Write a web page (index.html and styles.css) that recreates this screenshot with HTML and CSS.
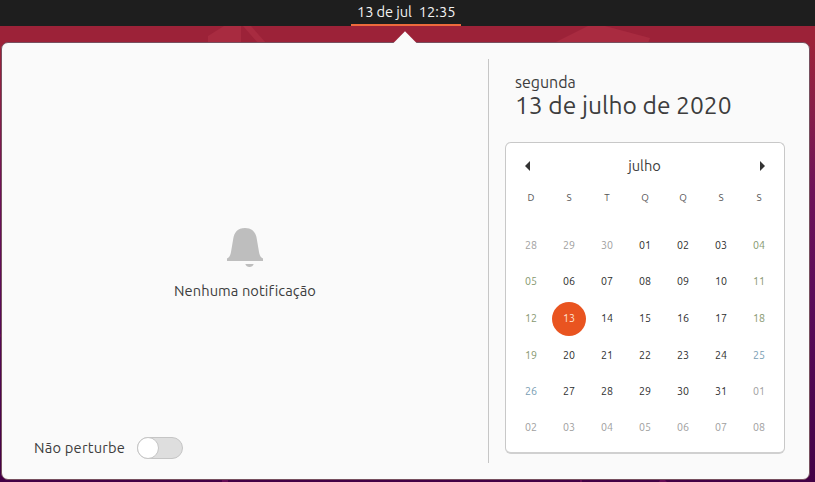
FILE: index.html
```html
<!DOCTYPE html>
<html lang="pt-BR">
<head>
<meta charset="utf-8">
<title>Calendário</title>
<link rel="stylesheet" href="styles.css">
</head>
<body>
<svg class="wallpaper" width="815" height="482" viewBox="0 0 815 482" aria-hidden="true">
  <path d="M208 36 224 26H241V44H208Z" fill="#a82b40"/>
  <path d="M243 26h8l15 17h-8Z" fill="#a82b40"/>
  <path d="M554 43 588 26h17l45 12-2 5Z" fill="#a92b40"/>
  <path d="M222 480h6v2h-6ZM580 480h2v2h-2ZM660 480h5l2 2h-8ZM0 268l2 2v2H0ZM0 334h2v3H0Z" fill="#650b55"/>
</svg>
<header class="topbar">
  <div class="clock"><span class="clock-date">13 de jul</span><span class="clock-time">12:35</span></div>
</header>
<main class="panel">
  <svg class="pointer" width="28" height="14" viewBox="0 0 28 14" aria-hidden="true"><path d="M1.500 14 14 1.200 26.500 14Z" fill="#fafafa"/></svg>
  <section class="notifications">
    <div class="empty">
      <svg class="bell" width="38" height="42" viewBox="0 0 38 42" aria-hidden="true">
        <path d="M19 1C11.500 1 8.200 5.500 7.200 12L5 25c-.6 3-1.300 4.500-2.500 5.500L1 31.500V34H37V31.500L35.500 30.500C34.300 29.500 33.600 28 33 25L30.800 12C29.800 5.500 26.500 1 19 1Z" fill="#bebebe"/>
        <path d="M19.300 37h8.400c-.6 1.800-2.200 3-4.200 3s-3.600-1.200-4.200-3Z" fill="#bebebe"/>
      </svg>
      <p class="empty-text">Nenhuma notificação</p>
    </div>
    <div class="dnd"><span class="dnd-label">Não perturbe</span><span class="switch"><span class="knob"></span></span></div>
  </section>
  <section class="datebox">
    <div class="today">
      <div class="weekday">segunda</div>
      <div class="fulldate">13 de julho de 2020</div>
    </div>
    <div class="calendar">
      <div class="month">
        <svg width="5" height="10" viewBox="0 0 5 10"><path d="M5 0v10L0 5Z" fill="#333"/></svg>
        <span class="month-name">julho</span>
        <svg width="5" height="10" viewBox="0 0 5 10"><path d="M0 0v10l5-5Z" fill="#333"/></svg>
      </div>
      <div class="week heads"><span>D</span><span>S</span><span>T</span><span>Q</span><span>Q</span><span>S</span><span>S</span></div>
      <div class="days">
        <span class="out">28</span><span class="out">29</span><span class="out">30</span><span>01</span><span>02</span><span>03</span><span class="rest">04</span>
        <span class="rest">05</span><span>06</span><span>07</span><span>08</span><span>09</span><span>10</span><span class="rest">11</span>
        <span class="rest">12</span><span class="current">13</span><span>14</span><span>15</span><span>16</span><span>17</span><span class="rest">18</span>
        <span class="rest">19</span><span>20</span><span>21</span><span>22</span><span>23</span><span>24</span><span class="rest blue">25</span>
        <span class="rest blue">26</span><span>27</span><span>28</span><span>29</span><span>30</span><span>31</span><span class="out">01</span>
        <span class="out">02</span><span class="out">03</span><span class="out">04</span><span class="out">05</span><span class="out">06</span><span class="out">07</span><span class="out">08</span>
      </div>
    </div>
  </section>
</main>
</body>
</html>
```
FILE: styles.css
```css
* { box-sizing: border-box; }
body {
  margin: 0;
  width: 815px;
  height: 482px;
  overflow: hidden;
  position: relative;
  font-family: Ubuntu, "Noto Sans", sans-serif;
  font-size: 14.667px;
  color: #3d3d3d;
  background: linear-gradient(180deg, #9c2238 0, #9c2238 42px, #851d49 115px, #6e1158 190px, #5a0b59 300px, #4d0650 390px, #430045 482px);
}
.wallpaper { position: absolute; left: 0; top: 0; }
.topbar {
  position: relative;
  height: 26px;
  background: #1e1e1e;
  display: flex;
  padding-left: 351px;
}
.clock {
  width: 110px;
  height: 26px;
  border-bottom: 2px solid #ee6a3c;
  display: flex;
  justify-content: space-between;
  padding: 0 5.5px 0 6px;
  color: #f2f2f2;
  line-height: 24px;
  white-space: pre;
}
.clock-date { letter-spacing: -0.1px; }
.panel {
  position: relative;
  width: 809px;
  height: 438px;
  margin: 16px 0 0 1px;
  border: 1px solid #77505f;
  border-radius: 7px;
  background: #fafafa;
  display: flex;
}
.pointer { position: absolute; left: 389px; top: -13px; }
.notifications {
  width: 486px;
  display: flex;
  flex-direction: column;
  justify-content: space-between;
  padding: 183px 0 20px;
}
.empty { display: flex; flex-direction: column; align-items: center; }
.bell { display: block; margin-top: 1px; }
.empty-text { margin: 12px 0 0; line-height: 20px; white-space: nowrap; letter-spacing: 0.08px; }
.dnd { display: flex; align-items: center; padding-left: 32px; height: 22px; }
.dnd-label { width: 103px; margin-top: -2px; white-space: nowrap; letter-spacing: 0.22px; }
.switch {
  width: 46px;
  height: 22px;
  border: 1px solid #c5c5c5;
  border-radius: 11px;
  background: #dedede;
}
.knob {
  display: block;
  width: 22px;
  height: 22px;
  margin: -1px;
  border: 1px solid #c5c5c5;
  border-radius: 50%;
  background: #fff;
}
.datebox {
  margin: 16px 0;
  height: 404px;
  flex: 1;
  border-left: 1px solid #c6c6c6;
  padding: 13px 24px 0 16px;
}
.today { height: 70px; padding-left: 10px; white-space: nowrap; }
.weekday { font-size: 16px; line-height: 21px; }
.fulldate { font-size: 24.6px; line-height: 25px; }
.calendar {
  width: 280px;
  height: 312px;
  border: 1px solid #c8c8c8;
  border-bottom-width: 2px;
  border-bottom-color: #d0d0d0;
  border-radius: 6px;
  background: #fff;
  padding: 0 6px;
}
.month {
  height: 45px;
  padding: 0 13px;
  display: flex;
  align-items: center;
  justify-content: space-between;
}
.month-name { margin-right: 1px; }
.week, .days { display: grid; grid-template-columns: repeat(7, 38px); text-align: center; }
.heads { height: 20px; line-height: 20px; font-size: 9.8px; color: #555; }
.days { margin-top: 19px; grid-template-rows: 36px 37px 37px 36px 36px 36px; line-height: 36px; font-size: 10.667px; color: #2e2e2e; }
.out { color: #a0a0a0; }
.rest { color: #86986f; }
.blue { color: #789db3; }
.current {
  width: 34px;
  height: 34px;
  line-height: 32px;
  border-radius: 50%;
  margin-top: 2px;
  justify-self: center;
  background: #e95420;
  color: #ffe6d5;
}
```
